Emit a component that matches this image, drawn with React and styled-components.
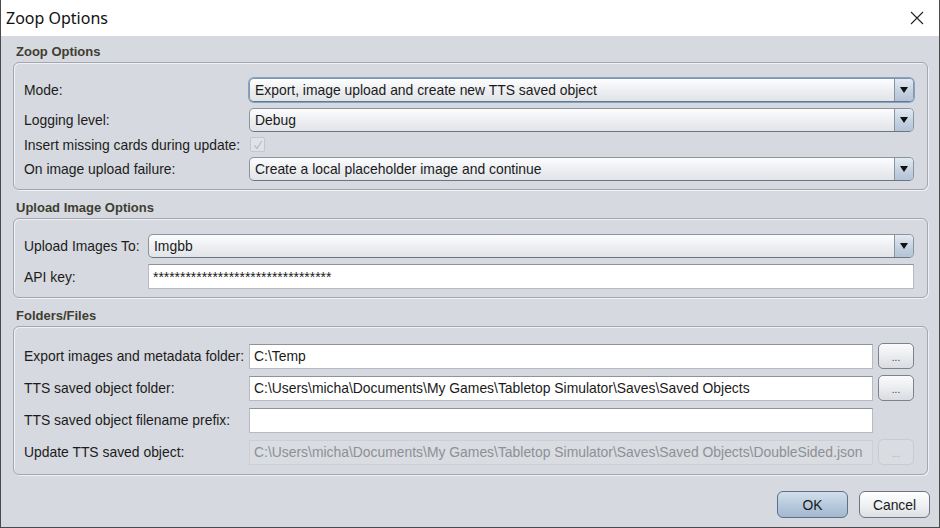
import React from 'react'
import styled, { createGlobalStyle, css } from 'styled-components'

const Global = createGlobalStyle`
  html, body { margin: 0; padding: 0; }
  body {
    background: #d6d9df;
    font-family: "Liberation Sans", Arial, sans-serif;
  }
`

function Combo({ value, focused }) {
  return (
    <ComboBox focused={focused}>
      <ComboText>{value}</ComboText>
      <ArrowButton>
        <svg width="8" height="6" viewBox="0 0 8 6">
          <path d="M0 0 L8 0 L4 6 Z" fill="#111" />
        </svg>
      </ArrowButton>
    </ComboBox>
  )
}

function App() {
  return (
    <Window>
      <Global />
      <TitleBar>
        <TitleText>Zoop Options</TitleText>
        <CloseIcon>
          <svg width="14" height="14" viewBox="0 0 14 14">
            <path d="M1 1 L13 13 M13 1 L1 13" stroke="#222" strokeWidth="1.1" />
          </svg>
        </CloseIcon>
      </TitleBar>
      <Body>
        <Section>
          <SectionTitle>Zoop Options</SectionTitle>
          <GroupBox>
            <Row>
              <Label width={225}>Mode:</Label>
              <Combo value="Export, image upload and create new TTS saved object" focused />
            </Row>
            <Row>
              <Label width={225}>Logging level:</Label>
              <Combo value="Debug" />
            </Row>
            <Row short>
              <Label width={225}>Insert missing cards during update:</Label>
              <Checkbox>
                <svg width="10" height="10" viewBox="0 0 10 10">
                  <path d="M1.5 5.5 L4 8.5 L8.8 1" stroke="#b9bcc2" strokeWidth="1.2" fill="none" />
                </svg>
              </Checkbox>
            </Row>
            <Row>
              <Label width={225}>On image upload failure:</Label>
              <Combo value="Create a local placeholder image and continue" />
            </Row>
          </GroupBox>
        </Section>

        <Section>
          <SectionTitle>Upload Image Options</SectionTitle>
          <GroupBox>
            <Row>
              <Label width={124}>Upload Images To:</Label>
              <Combo value="Imgbb" />
            </Row>
            <Row>
              <Label width={124}>API key:</Label>
              <Field>{'*'.repeat(33)}</Field>
            </Row>
          </GroupBox>
        </Section>

        <Section>
          <SectionTitle>Folders/Files</SectionTitle>
          <GroupBox files>
            <Row>
              <Label width={225}>Export images and metadata folder:</Label>
              <Field>C:\Temp</Field>
              <BrowseButton>...</BrowseButton>
            </Row>
            <Row>
              <Label width={225}>TTS saved object folder:</Label>
              <Field>C:\Users\micha\Documents\My Games\Tabletop Simulator\Saves\Saved Objects</Field>
              <BrowseButton>...</BrowseButton>
            </Row>
            <Row>
              <Label width={225}>TTS saved object filename prefix:</Label>
              <Field></Field>
              <Spacer />
            </Row>
            <Row>
              <Label width={225}>Update TTS saved object:</Label>
              <Field disabled>C:\Users\micha\Documents\My Games\Tabletop Simulator\Saves\Saved Objects\DoubleSided.json</Field>
              <BrowseButton disabled>...</BrowseButton>
            </Row>
          </GroupBox>
        </Section>

        <Footer>
          <DialogButton primary>OK</DialogButton>
          <DialogButton>Cancel</DialogButton>
        </Footer>
      </Body>
    </Window>
  )
}

const Window = styled.div`
  width: 940px;
  height: 528px;
  box-sizing: border-box;
  border: 1px solid #4a4a4a;
  border-top: none;
  display: flex;
  flex-direction: column;
  background: #d6d9df;
  overflow: hidden;
`

const TitleBar = styled.div`
  height: 36px;
  flex: none;
  background: #fff;
  display: flex;
  align-items: center;
  justify-content: space-between;
  padding: 0 11px 0 5px;
`

const TitleText = styled.div`
  font-family: "Noto Sans", "Open Sans", sans-serif;
  font-size: 16px;
  color: #111;
`

const CloseIcon = styled.div`
  display: flex;
  margin-right: 4px;
`

const Body = styled.div`
  flex: 1;
  display: flex;
  flex-direction: column;
  padding: 8px 11px 0 12px;
`

const Section = styled.div`
  display: flex;
  flex-direction: column;
  margin-bottom: 10px;
`

const SectionTitle = styled.div`
  font-size: 13px;
  font-weight: bold;
  color: #3e3e32;
  line-height: 16px;
  padding-left: 3px;
  margin-bottom: 2px;
`

const GroupBox = styled.div`
  border: 1px solid #a4a7ad;
  border-radius: 6px;
  box-shadow: inset 1px 1px 0 #eef0f3, 1px 1px 0 #eef0f3;
  padding: ${({ files }) => (files ? '16px 13px 9px 10px' : '15px 13px 8px 10px')};
  display: flex;
  flex-direction: column;
  gap: 6px;
`

const Row = styled.div`
  display: flex;
  align-items: center;
  gap: 5px;
  height: ${({ short }) => (short ? '13px' : 'auto')};
`

const Label = styled.div`
  width: ${({ width }) => width - 5}px;
  flex: none;
  font-size: 13.9px;
  color: #1c1c1c;
  white-space: nowrap;
`

const ComboBox = styled.div`
  flex: 1;
  height: 24px;
  box-sizing: border-box;
  display: flex;
  border: 1px solid #8d939c;
  border-bottom-color: #6f757e;
  border-radius: 5px;
  background: linear-gradient(#fdfdfe, #eceef1 55%, #e1e4e8);
  overflow: hidden;
  ${({ focused }) =>
    focused &&
    css`
      box-shadow: 0 0 0 1px #79a6d2;
    `}
`

const ComboText = styled.div`
  flex: 1;
  font-size: 13.9px;
  color: #1a1a1a;
  padding-left: 5px;
  display: flex;
  align-items: center;
  white-space: nowrap;
`

const ArrowButton = styled.div`
  width: 18px;
  flex: none;
  border-left: 1px solid #8d939c;
  background: linear-gradient(#e3eaf2, #c4d2e1 55%, #b3c4d7);
  display: flex;
  align-items: center;
  justify-content: center;
`

const Checkbox = styled.div`
  width: 13px;
  height: 13px;
  margin-left: 1px;
  border: 1px solid #c3c6cc;
  border-radius: 2px;
  background: #dfe2e7;
  display: flex;
  align-items: center;
  justify-content: center;
`

const Field = styled.div`
  flex: 1;
  height: 25px;
  box-sizing: border-box;
  border: 1px solid #b7bac0;
  border-top-color: #8e9299;
  background: ${({ disabled }) => (disabled ? '#d9dce1' : '#fff')};
  color: ${({ disabled }) => (disabled ? '#8e9095' : '#1a1a1a')};
  font-size: 13.9px;
  padding-left: 4px;
  display: flex;
  align-items: center;
  white-space: nowrap;
  overflow: hidden;
  ${({ disabled }) =>
    disabled &&
    css`
      border-color: #ccd0d5;
    `}
`

const BrowseButton = styled.div`
  width: 36px;
  height: 26px;
  flex: none;
  box-sizing: border-box;
  border: 1px solid ${({ disabled }) => (disabled ? '#c8ccd2' : '#7d828a')};
  border-radius: 5px;
  background: ${({ disabled }) =>
    disabled ? '#d9dce1' : 'linear-gradient(#fbfbfc, #e9ebee 55%, #d9dce1)'};
  color: ${({ disabled }) => (disabled ? '#a8abb0' : '#333')};
  font-size: 10px;
  display: flex;
  align-items: center;
  justify-content: center;
  padding-top: 3px;
`

const Spacer = styled.div`
  width: 36px;
  height: 26px;
  flex: none;
`

const Footer = styled.div`
  display: flex;
  justify-content: flex-end;
  gap: 11px;
  margin-top: 6px;
  margin-right: -2px;
`

const DialogButton = styled.div`
  width: 71px;
  height: 27px;
  box-sizing: border-box;
  border: 1px solid ${({ primary }) => (primary ? '#5c7089' : '#6f747c')};
  border-radius: 6px;
  background: ${({ primary }) =>
    primary
      ? 'linear-gradient(#d3dfeb, #b5c8dc 55%, #a3b8cf)'
      : 'linear-gradient(#ffffff, #eef0f2 55%, #dde0e4)'};
  font-size: 13.9px;
  color: #1a1a1a;
  display: flex;
  align-items: center;
  justify-content: center;
`

export default App
